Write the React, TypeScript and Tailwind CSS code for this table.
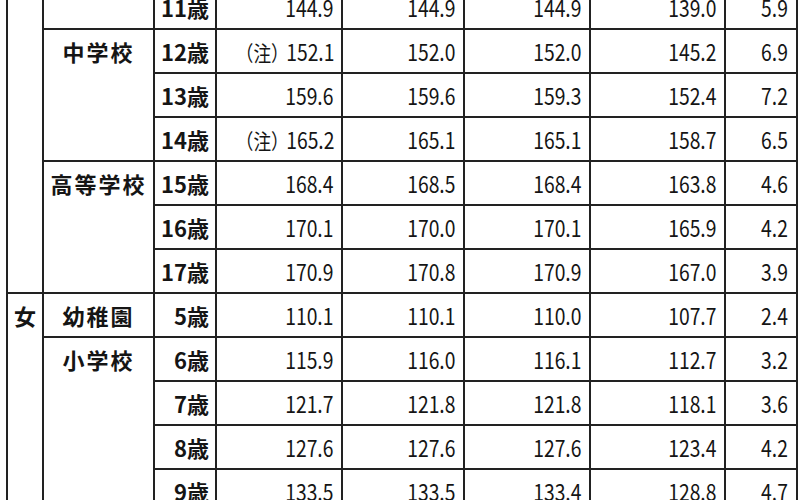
import React from "react";

type Row = {
  age: string;
  vals: string[];
  note?: boolean;
  col0?: { span: number; label: string };
  col1?: { span: number; label: string };
};

// 男子の続き（小学校の11歳から）と女子の始め
const rows: Row[] = [
  { age: "11歳", vals: ["144.9", "144.9", "144.9", "139.0", "5.9"], col0: { span: 7, label: "" }, col1: { span: 1, label: "" } },
  { age: "12歳", vals: ["152.1", "152.0", "152.0", "145.2", "6.9"], note: true, col1: { span: 3, label: "中学校" } },
  { age: "13歳", vals: ["159.6", "159.6", "159.3", "152.4", "7.2"] },
  { age: "14歳", vals: ["165.2", "165.1", "165.1", "158.7", "6.5"], note: true },
  { age: "15歳", vals: ["168.4", "168.5", "168.4", "163.8", "4.6"], col1: { span: 3, label: "高等学校" } },
  { age: "16歳", vals: ["170.1", "170.0", "170.1", "165.9", "4.2"] },
  { age: "17歳", vals: ["170.9", "170.8", "170.9", "167.0", "3.9"] },
  { age: "5歳", vals: ["110.1", "110.1", "110.0", "107.7", "2.4"], col0: { span: 5, label: "女" }, col1: { span: 1, label: "幼稚園" } },
  { age: "6歳", vals: ["115.9", "116.0", "116.1", "112.7", "3.2"], col1: { span: 4, label: "小学校" } },
  { age: "7歳", vals: ["121.7", "121.8", "121.8", "118.1", "3.6"] },
  { age: "8歳", vals: ["127.6", "127.6", "127.6", "123.4", "4.2"] },
  { age: "9歳", vals: ["133.5", "133.5", "133.4", "128.8", "4.7"] },
];

const cell = "border-2 border-[#222] p-0";

const App = () => {
  return (
    <div
      className="w-[800px] h-[500px] overflow-hidden bg-white text-[#151515]"
      style={{ fontFamily: '"Noto Sans CJK JP", "Noto Sans", sans-serif' }}
    >
      <table className="table-fixed border-collapse w-[790px] ml-[6px] mt-[-16px]">
        <colgroup>
          <col className="w-[36px]" />
          <col className="w-[111px]" />
          <col className="w-[62px]" />
          <col className="w-[126px]" />
          <col className="w-[122px]" />
          <col className="w-[126px]" />
          <col className="w-[135px]" />
          <col className="w-[72px]" />
        </colgroup>
        <tbody>
          {rows.map((r) => (
            <tr key={r.age} className="h-[44px]">
              {r.col0 && (
                <td rowSpan={r.col0.span} className={`${cell} align-top`}>
                  <div className="h-[42px] flex items-center justify-center text-[22px] font-bold">
                    {r.col0.label}
                  </div>
                </td>
              )}
              {r.col1 && (
                <td rowSpan={r.col1.span} className={`${cell} align-top`}>
                  <div className="h-[42px] flex items-center justify-center text-[22px] font-bold tracking-[2px]">
                    {r.col1.label}
                  </div>
                </td>
              )}
              <td className={`${cell} text-right pr-[6px] text-[22px] font-bold leading-none`}>
                {r.age}
              </td>
              {r.vals.map((v, i) => (
                <td key={i} className={`${cell} text-right pr-[8px] leading-none`}>
                  <span className="inline-block origin-right scale-x-[0.84] text-[23px] whitespace-nowrap">
                    {i === 0 && r.note && (
                      <span className="inline-block text-[21px] mr-[-3px]">（注）</span>
                    )}
                    {v}
                  </span>
                </td>
              ))}
            </tr>
          ))}
        </tbody>
      </table>
    </div>
  );
};

export default App;
